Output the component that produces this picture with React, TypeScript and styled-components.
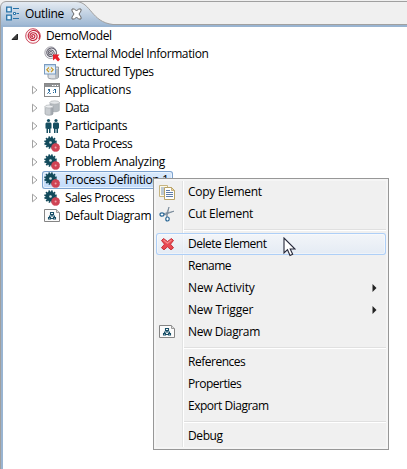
import React from 'react';
import styled, { createGlobalStyle } from 'styled-components';

const GlobalStyle = createGlobalStyle`
  * { box-sizing: border-box; }
  body { margin: 0; background: #fff; font-family: "Open Sans", "Noto Sans", sans-serif; font-size: 12px; color: #000; overflow: hidden; }
  svg { display: block; flex: none; }
`;

const View = styled.div`
  width: 407px;
  height: 469px;
  display: flex;
  flex-direction: column;
  background: #f0f0f0;
  overflow: hidden;
`;

const TabBar = styled.header`
  position: relative;
  height: 27px;
  flex: none;
  display: flex;
  align-items: center;
  padding: 0 0 0 6px;
`;

const TabShape = styled.svg`
  position: absolute;
  inset: 0;
`;

const TabContent = styled.div`
  position: relative;
  display: flex;
  align-items: center;
  height: 27px;
`;

const TabTitle = styled.div`
  width: 51px;
  flex: none;
  padding-left: 5px;
`;

const Body = styled.main`
  flex: 1;
  background: #fff;
  border-left: 1px solid #a0a0a0;
  padding-left: 2px;
  box-shadow: inset 2px 0 #99b4d1;
`;

const Row = styled.div<{ $depth: number }>`
  height: 18px;
  display: flex;
  align-items: center;
  padding-left: ${(p) => 7 + p.$depth * 20}px;
`;

const Twisty = styled.span<{ $wide?: boolean }>`
  width: ${(p) => (p.$wide ? 15 : 14)}px;
  padding-left: ${(p) => (p.$wide ? 0 : 1)}px;
  flex: none;
  display: flex;
`;

const Node = styled.div<{ $selected?: boolean }>`
  height: 18px;
  flex: none;
  display: flex;
  align-items: center;
  gap: 5px;
  padding: 0 2px 0 0;
  border-radius: 3px;
  ${(p) => p.$selected && `
    background: linear-gradient(#dcebfc, #c1dbfc) padding-box;
    box-shadow: inset 0 0 0 1px #7da2ce, inset 0 0 0 2px #e8f2fd;
    width: 131px;
    margin-left: -2px;
    padding-left: 2px;
  `}
`;

const Label = styled.span<{ $ls: number }>`
  white-space: nowrap;
  line-height: 18px;
  letter-spacing: ${(p) => p.$ls}px;
`;

const Menu = styled.div`
  position: absolute;
  left: 153px;
  top: 178px;
  width: 236px;
  height: 272px;
  padding: 2px;
  border: 1px solid #979797;
  background: linear-gradient(90deg, transparent 28px, #e2e3e3 28px, #e2e3e3 29px, #fff 29px, #fff 30px, transparent 30px) 0 2px / 100% 266px no-repeat, #f0f0f0;
  box-shadow: inset 0 0 0 2px #f5f5f5;
`;

const MenuItem = styled.div<{ $active?: boolean }>`
  height: 22px;
  display: flex;
  align-items: center;
  padding: 0 9px 0 3px;
  border-radius: 3px;
  ${(p) => p.$active && `
    background: linear-gradient(rgba(244,247,251,.8), rgba(221,232,246,.65));
    box-shadow: inset 0 0 0 1px #aecff7, inset 0 0 0 2px rgba(255,255,255,.4);
  `}
`;

const MenuIcon = styled.span`
  width: 29px;
  flex: none;
  display: flex;
`;

const MenuLabel = styled(Label)`
  flex: 1;
`;

const Separator = styled.div`
  height: 8px;
  padding: 4px 0 0 28px;
  &::before {
    content: '';
    display: block;
    height: 2px;
    background: linear-gradient(#e0e0e0 50%, #fff 50%);
  }
`;

const Pointer = styled.svg`
  position: absolute;
  left: 283px;
  top: 237px;
`;

const Icon = ({ children }: { children: React.ReactNode }) => (
  <svg width="16" height="16" viewBox="0 0 16 16">{children}</svg>
);

const spiral = 'M8 8.6C7 9 6.2 8 7 7.1c1-1.1 3-.3 2.9 1.2C9.8 10.6 6.8 11 5.6 9.6 4.1 7.7 5.4 5 7.8 4.8c2.6-.2 4.7 1.8 4.3 4.3-.4 2.7-3.6 4-6 3C3.3 10.9 2.4 7.5 4 5c1.7-2.7 5.3-3.3 8-1.6 2.5 1.6 3.4 5 1.9 7.7';

const ModelIcon = () => (
  <Icon>
    <circle cx="8" cy="8" r="7.3" fill="#fdf3f4" stroke="#cd4c5e" strokeWidth="1" />
    <path d={spiral} fill="none" stroke="#c4283f" strokeWidth="1.15" />
  </Icon>
);

const ExternalIcon = () => (
  <Icon>
    <g transform="scale(.84)">
      <circle cx="8" cy="8" r="7" fill="#f3f3f5" stroke="#8a8893" strokeWidth=".9" />
      <path d={spiral} fill="none" stroke="#5c5a68" strokeWidth="1.2" />
    </g>
    <path d="M9 8.500h6.500l-1.700 2 2.200 3-2 2-2.800-3-2.200 2z" fill="#e81f2b" />
  </Icon>
);

const TypesIcon = () => (
  <Icon>
    <path d="M4 5v8.500c1 2 9 2 10.500 0V3H9z" fill="#dcdfe3" stroke="#8c939b" strokeWidth=".9" />
    <path d="M11 5h3v9l-3 .8z" fill="#b5bbc1" />
    <rect x=".5" y=".5" width="11" height="9.500" fill="#e8f3fc" stroke="#7a9bc0" />
    <path d="M1 1h10v1.500H1z" fill="#bad4ec" />
    <path d="M5 3.500 2.800 5.700 5 8M7 3.500 9.200 5.700 7 8" fill="none" stroke="#c69a2c" strokeWidth="1.200" />
    <path d="M5.500 5.200h1v1h-1z" fill="#c69a2c" />
  </Icon>
);

const ApplicationIcon = () => (
  <Icon>
    <rect x=".5" y="1.500" width="15" height="13" fill="#fff" stroke="#888" />
    <path d="M1 2h14v3H1z" fill="#8d8f91" />
    <path d="M8 3h1.500v1H8zM10.500 3H12v1h-1.500zM13 3h1.300v1H13z" fill="#fff" />
    <path d="M4 7h2v1H4zM5 8h1v2H5zM4 10h1v1H4zM10 7h2v1h-2zM11 8h1v3h-1zM9 10h1v1H9z" fill="#28699a" />
    <path d="M5 11h2v1H5zM9 8h1v1H9zM3 11h1v1H3zM4 8h1v1H4z" fill="#789fbd" />
  </Icon>
);

const DataIcon = () => (
  <Icon>
    <path d="M6 2.500v8c1 1.700 8 1.700 9.300 0v-8z" fill="#b4babf" stroke="#999fa4" strokeWidth=".6" />
    <ellipse cx="10.600" cy="2.500" rx="4.700" ry="1.700" fill="#e4e7e9" stroke="#a4a9ad" strokeWidth=".6" />
    <path d="M1 6.500v7.500c1 1.700 7 1.700 8 0V6.500z" fill="#c9cdd1" stroke="#969ca1" strokeWidth=".6" />
    <path d="M6.500 7H9v7.500l-2.500.500z" fill="#8e959b" opacity=".6" />
    <ellipse cx="5" cy="6.500" rx="4" ry="1.500" fill="#eceef0" stroke="#a4a9ad" strokeWidth=".6" />
  </Icon>
);

const PeopleIcon = () => (
  <Icon>
    <g fill="#174f61">
      <circle cx="4.500" cy="2.500" r="1.600" />
      <path d="M2.500 4.500h4l1 1v5h-1V15H5v-4H4v4H2.500v-4.500h-1v-5z" />
      <circle cx="12" cy="2.500" r="1.600" />
      <path d="M10 4.500h4l1 1v5h-1V15h-1.500v-4h-1v4H10v-4.500H9v-5z" />
    </g>
  </Icon>
);

const GearIcon = () => (
  <Icon>
    <circle cx="6.500" cy="6.500" r="5" fill="#124a5b" />
    <circle cx="6.500" cy="6.500" r="5.400" fill="none" stroke="#124a5b" strokeWidth="1.800" strokeDasharray="1.600 1.230" />
    <circle cx="6.500" cy="6.500" r="1.300" fill="#dce7e9" />
    <circle cx="11.600" cy="11.600" r="4" fill="#d04354" />
    <circle cx="11.600" cy="11.600" r="4.100" fill="none" stroke="#d04354" strokeWidth=".8" strokeDasharray="1.300 .8" />
    <circle cx="11.600" cy="11.600" r="1" fill="#eca5ab" />
  </Icon>
);

const DiagramIcon = () => (
  <Icon>
    <path d="M.5 1.500h12l3 3v9H.5z" fill="#fbfbfb" stroke="#858585" />
    <path d="M12.500 1.500v3h3" fill="#ddd" stroke="#9a9a9a" />
    <path d="M6.500 4.500h3v2h-3zM4.500 9.500h2v1.500h-2zM9.500 9.500h2v1.500h-2zM8 7v1.500M5.500 9V8h5v1M7 10.500h2.500" fill="none" stroke="#174f68" strokeWidth="1.100" />
  </Icon>
);

const CopyIcon = () => (
  <Icon>
    <path d="M.5 1.500h8v11h-8z" fill="#fffbe9" stroke="#c7b582" />
    <path d="M2 4h3M2 6h3M2 8h3M2 10h3" stroke="#7c96bd" />
    <path d="M5.500 3.500h7l3 3v9h-10z" fill="#fff" stroke="#b9a366" />
    <path d="M12.500 3.500v3h3z" fill="#ecd99f" stroke="#b19a5c" strokeWidth=".7" />
    <path d="M7 6.500h4M7 8.500h7M7 10.500h7M7 12.500h7" stroke="#5e7daa" />
  </Icon>
);

const CutIcon = () => (
  <Icon>
    <path d="M10 1 8 11l-1-2zM15 5.200 5 9v-1.500z" fill="#c3cdd6" stroke="#6f8192" strokeWidth=".7" />
    <ellipse cx="3" cy="8.500" rx="2" ry="1.700" fill="#fff" stroke="#286695" strokeWidth="1.200" />
    <ellipse cx="8.500" cy="13" rx="1.700" ry="2" fill="#fff" stroke="#286695" strokeWidth="1.200" />
  </Icon>
);

const DeleteIcon = () => (
  <Icon>
    <path d="M4.500 2.500 8.500 5.500l4-3 2 2-3 3.700 3 3.600-2.500 2-3.500-3-3.500 3-2.500-2 3-3.600-3-3.700z" fill="#e94952" stroke="#c5303a" strokeWidth="1" strokeLinejoin="round" />
    <path d="m4.500 4 4 3.300L12.500 4" fill="none" stroke="#f58a8b" strokeWidth="1.200" />
  </Icon>
);

const Collapsed = () => (
  <svg width="8" height="10" viewBox="0 0 8 10"><path d="M1.500 1.200v7.600L6 5z" fill="#fff" stroke="#a2a2a2" /></svg>
);
const Expanded = () => (
  <svg width="9" height="9" viewBox="0 0 9 9"><path d="M7.500 2v5.500H2z" fill="#404040" stroke="#222" /></svg>
);
const SubmenuArrow = () => (
  <svg width="5" height="8" viewBox="0 0 5 8"><path d="M.5 0v8L4.500 4z" fill="#222" /></svg>
);

const nodes = [
  { label: 'DemoModel', ls: -0.35, icon: <ModelIcon />, depth: 0, twisty: <Expanded /> },
  { label: 'External Model Information', ls: -0.4, icon: <ExternalIcon />, depth: 1 },
  { label: 'Structured Types', ls: -0.4, icon: <TypesIcon />, depth: 1 },
  { label: 'Applications', ls: -0.2, icon: <ApplicationIcon />, depth: 1, twisty: <Collapsed /> },
  { label: 'Data', ls: -0.6, icon: <DataIcon />, depth: 1, twisty: <Collapsed /> },
  { label: 'Participants', ls: -0.35, icon: <PeopleIcon />, depth: 1, twisty: <Collapsed /> },
  { label: 'Data Process', ls: -0.45, icon: <GearIcon />, depth: 1, twisty: <Collapsed /> },
  { label: 'Problem Analyzing', ls: -0.22, icon: <GearIcon />, depth: 1, twisty: <Collapsed /> },
  { label: 'Process Definition 1', ls: -0.38, icon: <GearIcon />, depth: 1, twisty: <Collapsed />, selected: true },
  { label: 'Sales Process', ls: -0.45, icon: <GearIcon />, depth: 1, twisty: <Collapsed /> },
  { label: 'Default Diagram', ls: -0.36, icon: <DiagramIcon />, depth: 1 },
];

type Entry = { label: string; ls: number; icon?: React.ReactNode; active?: boolean; submenu?: boolean } | null;

const entries: Entry[] = [
  { label: 'Copy Element', ls: -0.28, icon: <CopyIcon /> },
  { label: 'Cut Element', ls: -0.3, icon: <CutIcon /> },
  null,
  { label: 'Delete Element', ls: -0.48, icon: <DeleteIcon />, active: true },
  { label: 'Rename', ls: -0.5 },
  { label: 'New Activity', ls: -0.12, submenu: true },
  { label: 'New Trigger', ls: -0.2, submenu: true },
  { label: 'New Diagram', ls: -0.35, icon: <DiagramIcon /> },
  null,
  { label: 'References', ls: -0.48 },
  { label: 'Properties', ls: -0.48 },
  { label: 'Export Diagram', ls: -0.48 },
  null,
  { label: 'Debug', ls: -0.4 },
];

export default function App() {
  return (
    <>
      <GlobalStyle />
      <View>
        <TabBar>
          <TabShape width="407" height="27" viewBox="0 0 407 27">
            <defs>
              <linearGradient id="tab" x1="0" y1="0" x2="0" y2="1">
                <stop offset="0" stopColor="#e6ecf3" />
                <stop offset="1" stopColor="#99b4d1" />
              </linearGradient>
            </defs>
            <path d="M0 24h407v3H0z" fill="#99b4d1" />
            <path d="M.5 27V7Q1 2 6 1.500H76C91 2 91 22 113 24.500V25H.5z" fill="url(#tab)" />
            <path d="M.5 27V7Q1 2 6 1.500H407M76 1.500C91 2 91 22 113 24.500H407" fill="none" stroke="#a0a0a0" />
          </TabShape>
          <TabContent>
            <svg width="14" height="16" viewBox="0 0 14 16">
              <path d="M.7 1.200h4.600v4.600H.7zM.7 9.200h4.600v4.600H.7z" fill="#e5f3fc" stroke="#2772a8" strokeWidth="1.300" />
              <path d="M7 2.500h6M10.500 7.500H13M7 12.500h6" stroke="#2772a8" strokeWidth="1.200" />
              <path d="M7.500 6.500h2v2h-2z" fill="#fff" stroke="#2772a8" />
            </svg>
            <TabTitle><Label $ls={-0.3}>Outline</Label></TabTitle>
            <svg width="12" height="12" viewBox="0 0 12 12">
              <path d="M1 1h2.500L5.500 3l2-2H10v2L8 6l2 3v2H7.500l-2-2-2 2H1V9l2-3-2-3z" fill="#fff" stroke="#686868" />
            </svg>
          </TabContent>
        </TabBar>
        <Body>
          {nodes.map((n) => (
            <Row key={n.label} $depth={n.depth}>
              <Twisty $wide={n.depth === 0}>{n.twisty}</Twisty>
              <Node $selected={n.selected}>
                {n.icon}
                <Label $ls={n.ls}>{n.label}</Label>
              </Node>
            </Row>
          ))}
        </Body>
      </View>
      <Menu>
        {entries.map((e, i) =>
          e ? (
            <MenuItem key={e.label} $active={e.active}>
              <MenuIcon>{e.icon}</MenuIcon>
              <MenuLabel $ls={e.ls}>{e.label}</MenuLabel>
              {e.submenu && <SubmenuArrow />}
            </MenuItem>
          ) : (
            <Separator key={i} />
          ),
        )}
      </Menu>
      <Pointer width="13" height="20" viewBox="0 0 13 20">
        <path d="M1 1v15l3.500-3.300L7 18.500l2.700-1.200L7.200 12H12z" fill="#fff" stroke="#25283a" strokeWidth="1.100" />
      </Pointer>
    </>
  );
}
